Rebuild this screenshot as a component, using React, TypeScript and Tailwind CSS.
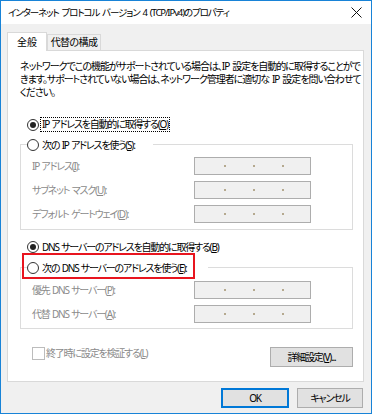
import React from "react";

const FONT = "font-['Noto_Sans','Noto_Sans_CJK_JP',sans-serif] [font-feature-settings:'palt']";

function Radio({ checked }: { checked?: boolean }) {
  return (
    <span className="w-[12px] h-[12px] rounded-full border border-[#333333] bg-white flex items-center justify-center shrink-0">
      {checked && <span className="w-[6px] h-[6px] rounded-full bg-[#222222]" />}
    </span>
  );
}

function IpBox() {
  return (
    <div className="w-[117px] h-[18px] border border-[#adadad] bg-[#f0f0f0] flex items-center pl-[29px] gap-[27px]">
      <span className="w-[2px] h-[2px] bg-[#b5a98f]" />
      <span className="w-[2px] h-[2px] bg-[#b5a98f]" />
      <span className="w-[2px] h-[2px] bg-[#b5a98f]" />
    </div>
  );
}

function FieldRow({ children }: { children: React.ReactNode }) {
  return (
    <div className="flex items-center h-[18px]">
      <div className="w-[173px] pl-[11px] text-[#8a8a8a] whitespace-nowrap">{children}</div>
      <IpBox />
    </div>
  );
}

export default function App() {
  return (
    <div className={`w-[372px] h-[414px] overflow-hidden border border-[#1883d7] bg-[#f0f0f0] flex flex-col text-[10px] leading-[13px] tracking-[-1.2px] [word-spacing:1px] text-black ${FONT}`}>
      {/* title bar */}
      <div className="h-[23px] bg-white flex items-center justify-between pl-[7px] pr-[9px]">
        <span className="text-[9.5px] tracking-[-1.1px] [word-spacing:1.5px] whitespace-nowrap">インターネット プロトコル バージョン 4 (TCP/IPv4)のプロパティ</span>
        <svg width="11" height="11" viewBox="0 0 11 11" className="shrink-0">
          <path d="M0.5 0.5 L10.5 10.5 M10.5 0.5 L0.5 10.5" stroke="#111" strokeWidth="1" />
        </svg>
      </div>

      {/* tabs */}
      <div className="flex items-end ml-[6px] mt-[7px] h-[19px]">
        <div className="relative z-10 w-[40px] h-[19px] -mb-[1px] bg-white border border-b-0 border-[#d9d9d9] flex items-center justify-center tracking-[0px]">
          全般
        </div>
        <div className="w-[54px] h-[16px] bg-[#f0f0f0] border border-b-0 border-[#d9d9d9] flex items-center justify-center whitespace-nowrap tracking-[-0.6px]">
          代替の構成
        </div>
      </div>

      {/* panel */}
      <div className="ml-[6px] w-[357px] h-[332px] border border-[#d9d9d9] bg-white pl-[12px] pr-[10px] pt-[9px] flex flex-col">
        <p className="whitespace-nowrap tracking-[-1.05px] [word-spacing:1.5px]">
          ネットワークでこの機能がサポートされている場合は、IP 設定を自動的に取得することがで
          <br />
          きます。サポートされていない場合は、ネットワーク管理者に適切な IP 設定を問い合わせて
          <br />
          ください。
        </p>

        <div className="mt-[18px] h-[15px] flex items-center ml-[7px] gap-[1px]">
          <Radio checked />
          <span className="border border-dotted border-black px-[1px] h-[15px] flex items-center whitespace-nowrap">
            IP アドレスを自動的に取得する(<u>O</u>)
          </span>
        </div>

        <div className="mt-[12px] border border-[#dcdcdc] pb-[6px] flex flex-col">
          <div className="-mt-[7px] ml-[6px] w-[126px] h-[14px] bg-white flex items-center gap-[3px] whitespace-nowrap">
            <Radio />
            <span>次の IP アドレスを使う(<u>S</u>):</span>
          </div>
          <div className="mt-[5px] flex flex-col gap-[6px]">
            <FieldRow>IP アドレス(<u>I</u>):</FieldRow>
            <FieldRow>サブネット マスク(<u>U</u>):</FieldRow>
            <FieldRow>デフォルト ゲートウェイ(<u>D</u>):</FieldRow>
          </div>
        </div>

        <div className="mt-[10px] h-[14px] flex items-center ml-[7px] gap-[3px] whitespace-nowrap">
          <Radio checked />
          <span>DNS サーバーのアドレスを自動的に取得する(<u>B</u>)</span>
        </div>

        <div className="mt-[13px] border border-[#dcdcdc] pb-[5px] flex flex-col">
          <div className="relative -mt-[7px] ml-[6px] w-[181px] h-[14px] bg-white flex items-center gap-[3px] whitespace-nowrap">
            <Radio />
            <span>次の DNS サーバーのアドレスを使う(<u>E</u>):</span>
            <div className="absolute -left-[5px] -top-[8px] w-[173px] h-[26px] border-2 border-[#e8151f]" />
          </div>
          <div className="mt-[6px] flex flex-col gap-[6px]">
            <FieldRow>優先 DNS サーバー(<u>P</u>):</FieldRow>
            <FieldRow>代替 DNS サーバー(<u>A</u>):</FieldRow>
          </div>
        </div>

        <div className="mt-[18px] flex items-start justify-between">
          <div className="ml-[12px] flex items-center gap-[1px] h-[13px] whitespace-nowrap text-[#8a8a8a]">
            <span className="w-[13px] h-[13px] border border-[#bcbcbc] bg-white shrink-0" />
            <span>終了時に設定を検証する(<u>L</u>)</span>
          </div>
          <button className="w-[83px] h-[20px] bg-[#e1e1e1] border border-[#adadad] flex items-center justify-center whitespace-nowrap">
            詳細設定(<u>V</u>)...
          </button>
        </div>
      </div>

      {/* bottom buttons */}
      <div className="mt-[6px] flex justify-end gap-[8px] pr-[8px]">
        <button className="w-[68px] h-[20px] bg-[#e1e1e1] border-2 border-[#0078d7] flex items-center justify-center">
          OK
        </button>
        <button className="w-[66px] h-[20px] bg-[#e1e1e1] border border-[#adadad] flex items-center justify-center whitespace-nowrap tracking-[-1.2px]">
          キャンセル
        </button>
      </div>
    </div>
  );
}
